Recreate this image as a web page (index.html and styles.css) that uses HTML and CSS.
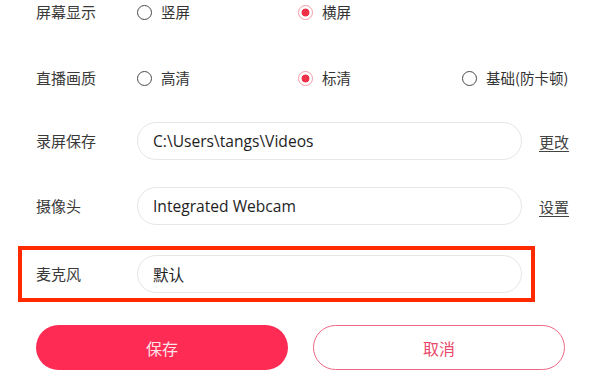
FILE: index.html
```html
<!DOCTYPE html>
<html lang="zh-CN">
<head>
<meta charset="utf-8">
<link rel="stylesheet" href="styles.css">
</head>
<body>
<div class="form">
  <div class="row row-radio r1">
    <div class="label">屏幕显示</div>
    <div class="options">
      <label class="opt"><span class="radio"></span>竖屏</label>
      <label class="opt"><span class="radio checked"></span>横屏</label>
    </div>
  </div>
  <div class="row row-radio r2">
    <div class="label">直播画质</div>
    <div class="options">
      <label class="opt"><span class="radio"></span>高清</label>
      <label class="opt"><span class="radio checked"></span>标清</label>
      <label class="opt"><span class="radio"></span>基础(防卡顿)</label>
    </div>
  </div>
  <div class="row r3">
    <div class="label">录屏保存</div>
    <div class="input">C:\Users\tangs\Videos</div>
    <a class="link">更改</a>
  </div>
  <div class="row r4">
    <div class="label">摄像头</div>
    <div class="input">Integrated Webcam</div>
    <a class="link">设置</a>
  </div>
  <div class="row r5 highlight">
    <div class="label">麦克风</div>
    <div class="input">默认</div>
  </div>
  <div class="buttons">
    <button class="btn primary">保存</button>
    <button class="btn ghost">取消</button>
  </div>
</div>
</body>
</html>
```
FILE: styles.css
```css
* { box-sizing: border-box; }
html, body { margin: 0; padding: 0; background: #fff; }
body {
  width: 600px;
  height: 378px;
  overflow: hidden;
  font-family: "Noto Sans CJK SC", "Open Sans", sans-serif;
  color: #333;
}
.form { display: flex; flex-direction: column; }
.row {
  display: grid;
  grid-template-columns: 101px 385px auto;
  align-items: center;
  padding-left: 36px;
}
.label { font-size: 15px; color: #3a3a3a; line-height: 20px; }
.row-radio { height: 24px; }
.r1 { margin-top: 0; }
.r2 { margin-top: 42px; }
.r3 { margin-top: 32px; }
.r4 { margin-top: 27px; }
.options {
  grid-column: 2 / 4;
  display: grid;
  grid-template-columns: 161px 164px auto;
  align-items: center;
}
.opt {
  display: flex;
  align-items: center;
  gap: 9px;
  font-size: 14.5px;
  color: #333;
  line-height: 20px;
}
.radio {
  width: 15px;
  height: 15px;
  border-radius: 50%;
  border: 1.5px solid #4a4a4a;
  flex: none;
}
.radio.checked {
  border-color: #f59aa6;
  background: radial-gradient(circle, #ee3048 0 3.6px, #fff 4.3px);
}
.input {
  height: 38px;
  border: 1px solid #e6e6e6;
  border-radius: 19px;
  padding-left: 15px;
  display: flex;
  align-items: center;
  font-family: "Open Sans", "Noto Sans CJK SC", sans-serif;
  font-size: 15.6px;
  color: #1e1e1e;
}
.link {
  margin-left: 17px;
  font-size: 15px;
  color: #444;
  text-decoration: underline;
  text-underline-offset: 3px;
  text-decoration-thickness: 1px;
}
.highlight {
  margin-top: 21px;
  margin-left: 18px;
  width: 517px;
  height: 56px;
  border: 4px solid #ff2a00;
  padding-left: 14px;
  grid-template-columns: 101px 385px;
}
.buttons {
  display: flex;
  gap: 25px;
  padding-left: 36px;
  margin-top: 23px;
}
.btn {
  width: 252px;
  height: 45px;
  border-radius: 23px;
  font-family: "Noto Sans CJK SC", sans-serif;
  font-size: 16px;
  cursor: pointer;
}
.primary {
  background: #fe2c55;
  border: none;
  color: #ffe3e9;
}
.ghost {
  background: #fff;
  border: 1.5px solid #ee6884;
  color: #e8496a;
}
```
